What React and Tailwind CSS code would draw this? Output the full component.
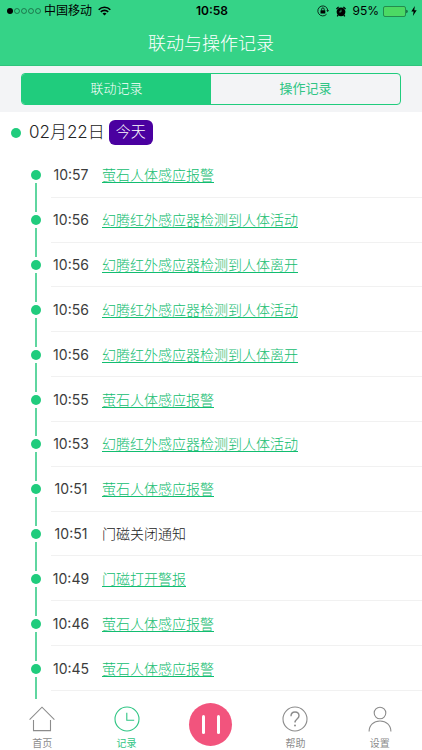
import React, { useState } from 'react';

/* ─── Data ────────────────────────────────────────────────────────────── */
const records = [
  { time: '10:57', text: '萤石人体感应报警', link: true },
  { time: '10:56', text: '幻腾红外感应器检测到人体活动', link: true },
  { time: '10:56', text: '幻腾红外感应器检测到人体离开', link: true },
  { time: '10:56', text: '幻腾红外感应器检测到人体活动', link: true },
  { time: '10:56', text: '幻腾红外感应器检测到人体离开', link: true },
  { time: '10:55', text: '萤石人体感应报警', link: true },
  { time: '10:53', text: '幻腾红外感应器检测到人体活动', link: true },
  { time: '10:51', text: '萤石人体感应报警', link: true },
  { time: '10:51', text: '门磁关闭通知', link: false },
  { time: '10:49', text: '门磁打开警报', link: true },
  { time: '10:46', text: '萤石人体感应报警', link: true },
  { time: '10:45', text: '萤石人体感应报警', link: true },
];

const tabs = ['联动记录', '操作记录'];

/* ─── Icons ───────────────────────────────────────────────────────────── */
const NavSvg = ({ children }) => (
  <svg
    viewBox="0 0 26 26"
    className="w-[26px] h-[26px]"
    fill="none"
    stroke="currentColor"
    strokeWidth="1.1"
    aria-hidden="true"
  >
    {children}
  </svg>
);

const HomeIcon = () => (
  <NavSvg>
    <path d="M.6 13.6 13 1.2l12.4 12.4" />
    <path d="M4.5 14v10.6h17V14" />
  </NavSvg>
);

const ClockIcon = () => (
  <NavSvg>
    <circle cx="13" cy="13" r="12" />
    <path d="M12.8 6.8v7.5h7.4" />
  </NavSvg>
);

const HelpIcon = () => (
  <NavSvg>
    <circle cx="13" cy="13" r="12" />
    <path d="M9 10.2c0-2.6 1.7-4.2 4-4.2s4 1.5 4 3.8c0 3.2-4 3.4-4 6.8" strokeWidth="1.4" />
    <circle cx="13" cy="19.4" r="1" fill="currentColor" stroke="none" />
  </NavSvg>
);

const UserIcon = () => (
  <NavSvg>
    <circle cx="13" cy="7" r="5.8" />
    <path d="M2.1 25.4c0-6.4 4.6-10.4 10.9-10.4s10.9 4 10.9 10.4" />
  </NavSvg>
);

const WifiIcon = () => (
  <svg viewBox="0 0 13 10" className="w-[13px] h-[10px]" fill="none" stroke="black" strokeWidth="1.6" aria-hidden="true">
    <path d="M.7 3.7c3.2-3.2 8.4-3.2 11.6 0" />
    <path d="M2.8 5.9c2-2 5.4-2 7.4 0" />
    <path d="M6.5 9.6 4.5 7.6c1.1-1.1 2.9-1.1 4 0z" fill="black" stroke="none" />
  </svg>
);

const LockIcon = () => (
  <svg viewBox="0 0 12 12" className="w-3 h-3" fill="none" stroke="black" strokeWidth=".8" aria-hidden="true">
    <path d="M9.6 9.2A5 5 0 1 1 10.8 5.4" />
    <path d="M9.3 5.3h2.7l-1.3 1.8z" fill="black" stroke="none" />
    <path d="M4.6 5.4V4.2a1.3 1.3 0 0 1 2.6 0v1.2" />
    <rect x="3.5" y="5.2" width="4.8" height="3.4" rx=".3" fill="black" stroke="none" />
  </svg>
);

const AlarmIcon = () => (
  <svg viewBox="0 0 10 11" className="w-[10px] h-[11px]" aria-hidden="true">
    <circle cx="5" cy="5.8" r="4.4" />
    <path d="M.4 3 2.6.9M9.6 3 7.4.9M2.2 9 1.2 10.4M7.8 9l1 1.4" stroke="black" strokeWidth="1.3" />
    <path d="M5 3.6v2.3h-1.8" fill="none" stroke="#35d387" strokeWidth=".7" />
  </svg>
);

const BatteryIcon = () => (
  <svg viewBox="0 0 25 11" className="w-[25px] h-[11px]" aria-hidden="true">
    <rect x=".5" y=".5" width="22" height="10" rx="1.5" fill="#4cd964" stroke="#1c7a45" strokeWidth=".8" />
    <path d="M23.4 3.8c1.6.3 1.6 3.1 0 3.4z" fill="#0d3d22" />
  </svg>
);

const BoltIcon = () => (
  <svg viewBox="0 0 6 10" className="w-[6px] h-[10px]" aria-hidden="true">
    <path d="M3.8 0 .3 5.6h2.3L1.9 10l3.8-5.8H3.3z" />
  </svg>
);

/* ─── Header ──────────────────────────────────────────────────────────── */
const StatusBar = () => (
  <div className="grid grid-cols-[1fr_auto_1fr] items-center h-[22px] pl-[7px] pr-[5px] text-xs text-black">
    <div className="flex items-center">
      <div className="flex gap-px">
        <span className="w-[6px] h-[6px] rounded-full bg-black" />
        <span className="w-[6px] h-[6px] rounded-full border border-black/40" />
        <span className="w-[6px] h-[6px] rounded-full border border-black/40" />
        <span className="w-[6px] h-[6px] rounded-full border border-black/40" />
        <span className="w-[6px] h-[6px] rounded-full border border-black/40" />
      </div>
      <span className="ml-[3px] mr-1.5">中国移动</span>
      <WifiIcon />
    </div>
    <span className="font-semibold">10:58</span>
    <div className="flex items-center justify-end">
      <LockIcon />
      <span className="w-[7px]" />
      <AlarmIcon />
      <span className="ml-1.5 mr-1">95%</span>
      <BatteryIcon />
      <span className="w-[3px]" />
      <BoltIcon />
    </div>
  </div>
);

const Header = () => (
  <header className="bg-[#35d387] border-b border-[#2fc47c]">
    <StatusBar />
    <h1 className="h-[43px] flex items-center justify-center text-lg font-light text-white">联动与操作记录</h1>
  </header>
);

const Segmented = ({ active, onChange }) => (
  <div className="bg-[#f3f4f6] px-[21px] py-[7px]">
    <div role="tablist" className="flex h-8 rounded-[4px] border border-[#20cc7d] overflow-hidden">
      {tabs.map((tab, i) => (
        <button
          key={tab}
          type="button"
          role="tab"
          aria-selected={active === i}
          onClick={() => onChange(i)}
          className={`flex-1 text-[13px] ${active === i ? 'bg-[#20cc7d] font-light text-white' : 'text-[#2fc584]'}`}
        >
          {tab}
        </button>
      ))}
    </div>
  </div>
);

/* ─── Timeline ────────────────────────────────────────────────────────── */
const TimelineRow = ({ record, first }) => (
  <li className="flex flex-1 min-h-11 pl-[31px]">
    <div className="flex flex-col items-center gap-[3px] w-[10px]">
      <span className={`flex-1 w-[2px] ${first ? '' : 'bg-[#5fd6a0]'}`} />
      <span className="w-[10px] h-[10px] rounded-full bg-[#20cc7d]" />
      <span className="flex-1 w-[2px] bg-[#5fd6a0]" />
    </div>
    <div className="flex flex-1 items-center ml-[10px] pt-px border-b border-[#f1f1f1]">
      <time className="w-10 text-center text-sm text-[#3c3c3c]">{record.time}</time>
      {record.link ? (
        <a href="#" className="ml-[11px] text-sm font-light text-[#12bd70] underline underline-offset-2">
          {record.text}
        </a>
      ) : (
        <span className="ml-[11px] text-sm font-light text-[#222]">{record.text}</span>
      )}
    </div>
  </li>
);

const Timeline = () => (
  <main className="flex flex-1 flex-col">
    <div className="flex items-center h-[41px] pl-[11px]">
      <span className="w-[10px] h-[10px] rounded-full bg-[#20cc7d]" />
      <h2 className="ml-2 text-[17px] font-light text-[#222]">02月22日</h2>
      <span className="ml-1 px-[7px] h-[25px] flex items-center rounded-md bg-[#4a00a0] text-[15px] font-light text-white">
        今天
      </span>
    </div>
    <ul className="flex flex-1 flex-col">
      {records.map((record, i) => (
        <TimelineRow key={i} record={record} first={i === 0} />
      ))}
    </ul>
    <div className="pl-[35px]">
      <div className="w-[2px] h-2 bg-[#5fd6a0]" />
    </div>
  </main>
);

/* ─── Bottom navigation ───────────────────────────────────────────────── */
const NavItem = ({ icon: Icon, label, active }) => (
  <a href="#" className={`flex flex-col items-center gap-1 pt-[7px] ${active ? 'text-[#2fc584]' : 'text-[#8c8c8c]'}`}>
    <Icon />
    <span className="text-[10px] leading-[14px]">{label}</span>
  </a>
);

const BottomNav = () => (
  <nav className="grid grid-cols-5 h-[51px] bg-white">
    <NavItem icon={HomeIcon} label="首页" />
    <NavItem icon={ClockIcon} label="记录" active />
    <div className="flex items-center justify-center">
      <button
        type="button"
        aria-label="暂停"
        className="flex items-center justify-center gap-3 w-[43px] h-[43px] rounded-full bg-[#f2547d]"
      >
        <span className="w-[3px] h-[19px] rounded-full bg-white" />
        <span className="w-[3px] h-[19px] rounded-full bg-white" />
      </button>
    </div>
    <NavItem icon={HelpIcon} label="帮助" />
    <NavItem icon={UserIcon} label="设置" />
  </nav>
);

/* ─── Default export ──────────────────────────────────────────────────── */
const App = () => {
  const [active, setActive] = useState(0);

  return (
    <div className="flex flex-col min-h-screen bg-white font-['Inter','Noto_Sans_CJK_SC',sans-serif]">
      <Header />
      <Segmented active={active} onChange={setActive} />
      <Timeline />
      <BottomNav />
    </div>
  );
};

export default App;
